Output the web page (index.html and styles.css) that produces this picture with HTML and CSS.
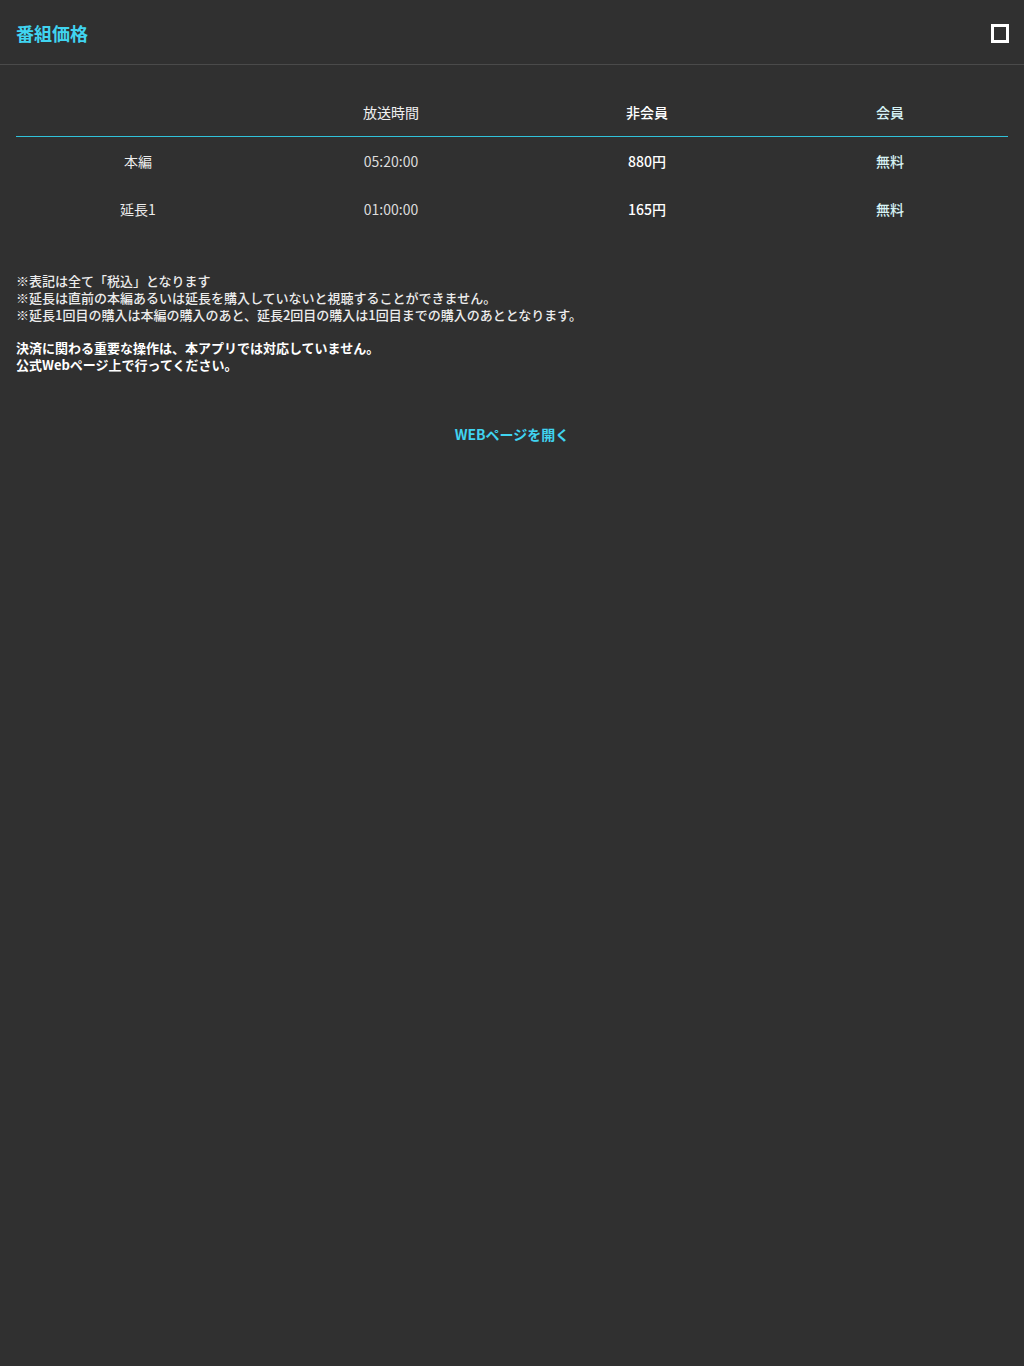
FILE: index.html
```html
<!DOCTYPE html>
<html lang="ja">
<head>
<meta charset="utf-8">
<title>番組価格</title>
<link rel="stylesheet" href="styles.css">
</head>
<body>
<header class="topbar">
  <h1 class="title">番組価格</h1>
  <button class="close" aria-label="閉じる"><span class="close-box"></span></button>
</header>
<main class="content">
  <table class="price">
    <colgroup>
      <col class="c1"><col class="c2"><col class="c3"><col class="c4">
    </colgroup>
    <thead>
      <tr class="head-row">
        <th></th>
        <th class="h-time">放送時間</th>
        <th class="h-non">非会員</th>
        <th class="h-mem">会員</th>
      </tr>
    </thead>
    <tbody>
      <tr>
        <td class="d-name">本編</td>
        <td class="d-time">05:20:00</td>
        <td class="d-non">880円</td>
        <td class="d-mem">無料</td>
      </tr>
      <tr>
        <td class="d-name">延長1</td>
        <td class="d-time">01:00:00</td>
        <td class="d-non">165円</td>
        <td class="d-mem">無料</td>
      </tr>
    </tbody>
  </table>
  <p class="notes">※表記は全て「税込」となります<br>※延長は直前の本編あるいは延長を購入していないと視聴することができません。<br>※延長1回目の購入は本編の購入のあと、延長2回目の購入は1回目までの購入のあととなります。</p>
  <p class="warn">決済に関わる重要な操作は、本アプリでは対応していません。<br>公式Webページ上で行ってください。</p>
  <div class="link-wrap"><a class="web-link" href="#">WEBページを開く</a></div>
</main>
</body>
</html>
```
FILE: styles.css
```css
html, body {
  margin: 0;
  padding: 0;
  background: #303030;
}
body {
  font-family: "Noto Sans CJK JP", "Noto Sans", sans-serif;
  color: #e8e8e8;
  min-height: 1366px;
}
.topbar {
  height: 62px;
  border-bottom: 1px solid #4a4a4a;
  display: flex;
  align-items: center;
  justify-content: space-between;
  padding: 2px 15px 0 16px;
}
.title {
  margin: 0;
  font-size: 18px;
  font-weight: 700;
  color: #40d4f0;
  line-height: 1;
}
.close {
  background: none;
  border: 0;
  padding: 0;
  width: 18px;
  height: 19px;
  display: flex;
  cursor: pointer;
}
.close-box {
  width: 18px;
  height: 19px;
  box-sizing: border-box;
  border: 3.5px solid #ffffff;
}
.content {
  padding: 25px 16px 0;
}
.price {
  width: 100%;
  border-collapse: collapse;
  table-layout: fixed;
  font-size: 14px;
}
.c1 { width: 244px; }
.c2 { width: 262px; }
.c3 { width: 250px; }
.c4 { width: 236px; }
.head-row {
  border-bottom: 1px solid #30c2da;
}
.price th {
  height: 44px;
  padding: 0 0 2px;
  text-align: center;
  font-weight: 500;
  vertical-align: middle;
}
.price td {
  height: 48px;
  padding: 0;
  text-align: center;
  vertical-align: middle;
  font-weight: 500;
}
.price .h-time { color: #f0f0f0; font-weight: 400; }
.h-non { color: #ffffff; }
.h-mem { color: #d6f2f4; }
.price .d-name { color: #ececec; font-weight: 400; }
.price .d-time { color: #dcdcdc; font-weight: 400; }
.d-non { color: #ffffff; }
.d-mem { color: #d6f2f4; }
.notes {
  margin: 39px 0 0;
  font-size: 13px;
  line-height: 17px;
  color: #ececec;
  font-weight: 500;
}
.warn {
  margin: 16px 0 0;
  font-size: 13px;
  line-height: 17px;
  color: #ffffff;
  font-weight: 700;
}
.link-wrap {
  margin-top: 48px;
  text-align: center;
}
.web-link {
  color: #40d4f0;
  font-size: 14px;
  font-weight: 700;
  text-decoration: none;
  line-height: 20px;
}
```
